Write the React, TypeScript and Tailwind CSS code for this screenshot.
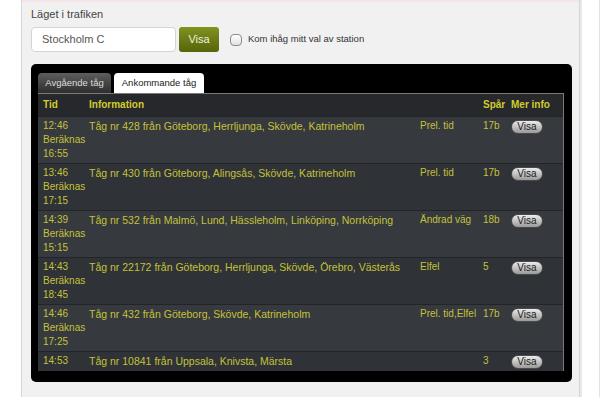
import React from 'react';

// Ankommande tåg till Stockholm C
const trains = [
  { time: '12:46', est: '16:55', info: 'Tåg nr 428 från Göteborg, Herrljunga, Skövde, Katrineholm', note: 'Prel. tid', track: '17b' },
  { time: '13:46', est: '17:15', info: 'Tåg nr 430 från Göteborg, Alingsås, Skövde, Katrineholm', note: 'Prel. tid', track: '17b' },
  { time: '14:39', est: '15:15', info: 'Tåg nr 532 från Malmö, Lund, Hässleholm, Linköping, Norrköping', note: 'Ändrad väg', track: '18b' },
  { time: '14:43', est: '18:45', info: 'Tåg nr 22172 från Göteborg, Herrljunga, Skövde, Örebro, Västerås', note: 'Elfel', track: '5' },
  { time: '14:46', est: '17:25', info: 'Tåg nr 432 från Göteborg, Skövde, Katrineholm', note: 'Prel. tid,Elfel', track: '17b' },
  { time: '14:53', est: '', info: 'Tåg nr 10841 från Uppsala, Knivsta, Märsta', note: '', track: '3' },
];

const cols = 'grid grid-cols-[47px_331px_63px_28px_57px]';

function VisaPill() {
  return (
    <span className="flex h-[14px] w-[32px] items-center justify-center rounded-full border border-[#4a4a4a] bg-gradient-to-b from-[#ececec] to-[#9a9a9a] text-[10px] leading-none text-[#222]">
      Visa
    </span>
  );
}

export default function App() {
  return (
    <div className="flex h-[397px] w-[600px] overflow-hidden bg-white font-[Liberation_Sans,Arial,sans-serif]">
      <div className="w-[22px] border-r border-[#d6d6d6]" />

      {/* huvudpanel */}
      <div className="flex w-[557px] flex-col bg-[#f1f1f1]">
        <div className="h-[2px] bg-[#f3e4e7]" />
        <div className="pl-[9px] pr-[7px]">
          <h1 className="mt-[4px] text-[11px] leading-[16px] text-[#444]">Läget i trafiken</h1>

          <div className="mt-[5px] flex items-center">
            <div className="flex h-[25px] w-[145px] items-center rounded-[4px] border border-[#d4d4d4] bg-white pl-[10px] text-[11px] text-[#555]">
              Stockholm C
            </div>
            <button className="ml-[3px] h-[25px] w-[40px] rounded-[3px] bg-gradient-to-b from-[#82921f] to-[#55650b] text-[11px] text-[#eef2d8]">
              Visa
            </button>
            <span className="ml-[11px] h-[12px] w-[12px] rounded-[4px] border border-[#8a8a8a] bg-gradient-to-b from-white to-[#e2e2e2]" />
            <span className="ml-[6px] text-[9.5px] text-[#333]">Kom ihåg mitt val av station</span>
          </div>

          {/* svart ruta med flikar och tabell */}
          <div className="mt-[12px] rounded-[5px] bg-black pb-[11px] pl-[7px] pr-[8px] pt-[9px]">
            <div className="flex gap-[3px] text-[9.5px]">
              <div className="flex h-[20px] w-[73px] items-center justify-center rounded-t-[4px] bg-gradient-to-b from-[#5e5e5e] to-[#2e2e2e] text-[#dcdcdc]">
                Avgående tåg
              </div>
              <div className="flex h-[20px] w-[90px] items-center justify-center rounded-t-[4px] bg-white text-[#222]">
                Ankommande tåg
              </div>
            </div>

            <div className="border-r border-t border-[#7a7a7a] text-[10px] leading-[14px]">
              <div className={`${cols} h-[22px] items-center bg-[#26282c] font-bold text-[#d0cd2c]`}>
                <span className="pl-[5px]">Tid</span>
                <span className="pl-[4px]">Information</span>
                <span />
                <span className="pl-[4px]">Spår</span>
                <span className="pl-[4px]">Mer info</span>
              </div>

              {trains.map((t, i) => (
                <div
                  key={t.info}
                  className={`${cols} border-t border-[#222428] pb-[2px] pt-[2px] text-[#c4c23a] ${i % 2 === 0 ? 'bg-[#36393e]' : 'bg-[#2f3236]'}`}
                >
                  <div className="pl-[5px]">
                    <div>{t.time}</div>
                    {t.est && (
                      <>
                        <div>Beräknas</div>
                        <div>{t.est}</div>
                      </>
                    )}
                  </div>
                  <div className="pl-[4px] text-[10.5px]">{t.info}</div>
                  <div className="pl-[4px]">{t.note}</div>
                  <div className="pl-[4px]">{t.track}</div>
                  <div className="pl-[4px] pt-[1px]">
                    <VisaPill />
                  </div>
                </div>
              ))}
            </div>
          </div>
        </div>
      </div>

      <div className="w-[3px] border-l border-[#d6d6d6] bg-[#e8e8e8]" />
      <div className="flex-1 border-r border-[#e2e2e2]" />
    </div>
  );
}
